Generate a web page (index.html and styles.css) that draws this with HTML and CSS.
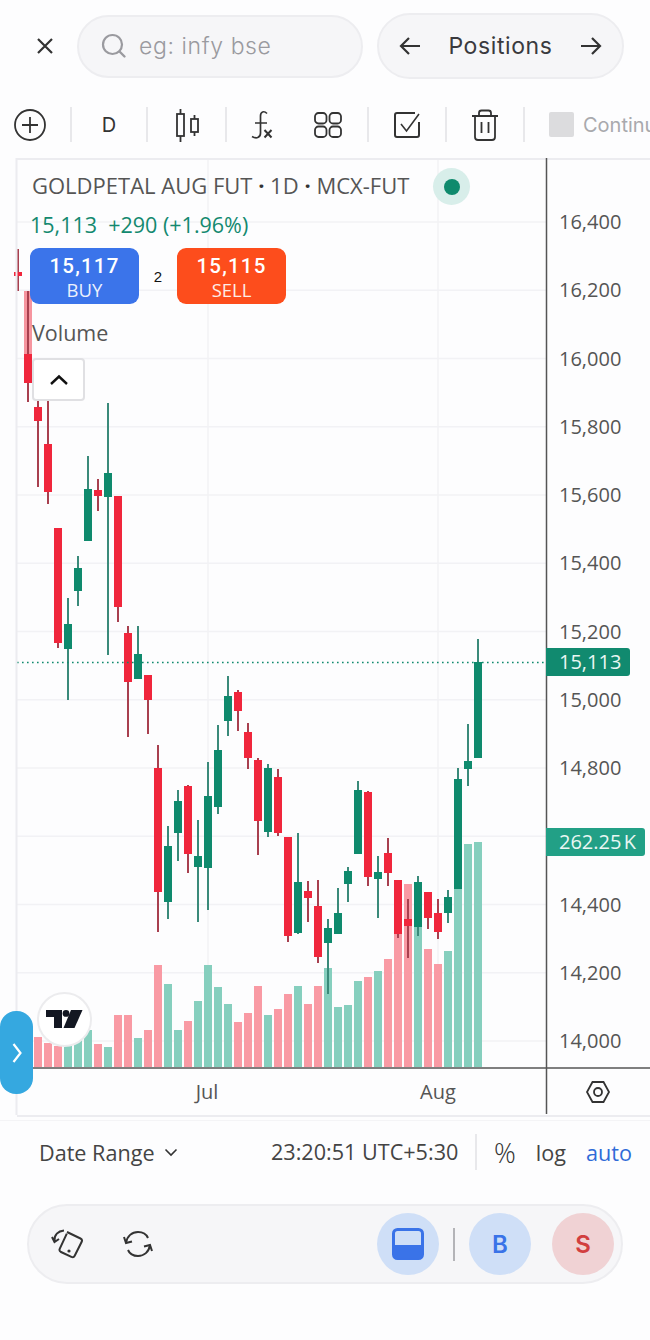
FILE: index.html
```html
<!DOCTYPE html>
<html lang="en">
<head>
    <meta charset="UTF-8">
    <meta name="viewport" content="width=device-width, initial-scale=1.0">
    <title>GOLDPETAL AUG FUT</title>
    <link rel="stylesheet" href="styles.css">
</head>
<body>
    <div class="topbar">
        <button class="close-btn" aria-label="Close">
            <svg width="18" height="18" viewBox="0 0 18 18"><path d="M2 2l14 14M16 2L2 16" class="ink" stroke-width="2.2"/></svg>
        </button>
        <div class="search">
            <svg width="28" height="28" viewBox="0 0 28 28"><circle cx="12.5" cy="12.5" r="9.5" fill="none" stroke="#9a9a9f" stroke-width="2.2"/><path d="M19.5 19.5l5 5" stroke="#9a9a9f" stroke-width="2.4" stroke-linecap="round"/></svg>
            <span>eg: infy bse</span>
        </div>
        <div class="watchlist">
            <svg width="22" height="20" viewBox="0 0 22 20"><path d="M21 10H2M10 2l-8 8 8 8" class="ink" stroke-width="2.2"/></svg>
            <span>Positions</span>
            <svg width="22" height="20" viewBox="0 0 22 20"><path d="M1 10h19M12 2l8 8-8 8" class="ink" stroke-width="2.2"/></svg>
        </div>
    </div>

    <div class="toolbar">
        <div class="tool tool-plus">
            <svg width="32" height="32" viewBox="0 0 32 32"><circle cx="16" cy="16" r="15" class="ink" stroke-width="1.8"/><path d="M16 8v16M8 16h16" class="ink" stroke-width="1.8"/></svg>
        </div>
        <div class="tool tool-d">D</div>
        <div class="tool tool-candle">
            <svg width="26" height="34" viewBox="0 0 26 34"><path d="M6.5 1v33M20.5 7v21" class="ink" stroke-width="1.8"/><rect x="3" y="6" width="7" height="22" class="ink-box" stroke-width="1.8"/><rect x="17" y="11" width="7" height="13" class="ink-box" stroke-width="1.8"/></svg>
        </div>
        <div class="tool tool-study">
            <svg width="24" height="30" viewBox="0 0 24 30"><path d="M17 3.5C14 .5 10.5 1.5 10.5 6v17c0 5-4.5 6-8.5 3.5M5 13h12" class="ink" stroke-width="1.7"/><path d="M14.5 20l7 7.5M21.5 20l-7 7.5" class="ink" stroke-width="2"/></svg>
            <svg width="28" height="26" viewBox="0 0 28 26"><rect x="1" y="1" width="11.5" height="10.5" rx="3.5" class="ink" stroke-width="1.8"/><rect x="15.5" y="1" width="11.5" height="10.5" rx="3.5" class="ink" stroke-width="1.8"/><rect x="1" y="14.5" width="11.5" height="10.5" rx="3.5" class="ink" stroke-width="1.8"/><rect x="15.5" y="14.5" width="11.5" height="10.5" rx="3.5" class="ink" stroke-width="1.8"/></svg>
        </div>
        <div class="tool tool-check">
            <svg width="28" height="28" viewBox="0 0 28 28"><path d="M22 2H4a2 2 0 0 0-2 2v20a2 2 0 0 0 2 2h20a2 2 0 0 0 2-2V11" class="ink" stroke-width="2"/><path d="M8 13l5.5 7L26 3" class="ink" stroke-width="1.6"/></svg>
        </div>
        <div class="tool tool-trash">
            <svg width="28" height="32" viewBox="0 0 28 32"><path d="M1 7h26M8 7V4a2.5 2.5 0 0 1 2.5-2.5h7A2.5 2.5 0 0 1 20 4v3" class="ink" stroke-width="1.8"/><path d="M4 7v21a3 3 0 0 0 3 3h14a3 3 0 0 0 3-3V7M10.5 13v11M17.5 13v11" class="ink" stroke-width="1.8"/></svg>
        </div>
        <div class="tool-continue">
            <span class="tick-box"></span>
            <span>Continue</span>
        </div>
    </div>

    <div class="chart" id="chart">
        <svg class="plot" id="plot" width="650" height="960" viewBox="0 158 650 960"></svg>
        <div id="axis"></div>

        <div class="legend">
            <div class="legend-title">GOLDPETAL AUG FUT <b>·</b> 1D <b>·</b> MCX-FUT</div>
            <div class="legend-price">15,113&nbsp; +290 (+1.96%)</div>
            <div class="trade-row">
                <div class="trade trade-buy"><strong>15,117</strong><span>BUY</span></div>
                <div class="spread">2</div>
                <div class="trade trade-sell"><strong>15,115</strong><span>SELL</span></div>
            </div>
            <div class="legend-volume">Volume</div>
            <div class="collapse-btn">
                <svg width="20" height="12" viewBox="0 0 20 12"><path d="M2 10l8-7.5 8 7.5" fill="none" stroke="#111" stroke-width="2.4"/></svg>
            </div>
        </div>

        <div class="live-dot"><i></i></div>
        <div class="tag tag-price">15,113</div>
        <div class="tag tag-volume">262.25 K</div>

        <div class="side-tab">
            <svg width="12" height="22" viewBox="0 0 12 22"><path d="M2.5 2l7 9-7 9" fill="none" stroke="#fff" stroke-width="2.2"/></svg>
        </div>
        <div class="tv-logo">
            <svg width="38" height="20" viewBox="0 0 38 20"><path d="M0 0h16v18H8V7H0z" fill="#131722"/><circle cx="20" cy="3.4" r="3.4" fill="#131722"/><path d="M25 0h11.5l-8 18H17.5z" fill="#131722"/></svg>
        </div>
        <div class="axis-settings">
            <svg width="26" height="24" viewBox="0 0 26 24"><path d="M7.5 2h11L24 12l-5.5 10h-11L2 12z" class="ink" stroke-width="1.8"/><circle cx="13" cy="12" r="4" class="ink" stroke-width="1.8"/></svg>
        </div>
    </div>

    <div class="statusbar">
        <div class="date-range">
            <span>Date Range</span>
            <svg width="14" height="9" viewBox="0 0 14 9"><path d="M1.5 1.5L7 7l5.5-5.5" class="ink" stroke-width="1.6"/></svg>
        </div>
        <div class="clock">23:20:51 UTC+5:30</div>
        <div class="scale-opts">
            <span class="opt-percent">%</span>
            <span>log</span>
            <span class="opt-auto">auto</span>
        </div>
    </div>

    <div class="actions">
        <svg class="act-icon" width="34" height="30" viewBox="0 0 34 30"><path d="M16 3.5L29.5 10a2.5 2.5 0 0 1 1.2 3.3l-7 14a2.5 2.5 0 0 1-3.3 1.1L10 23.5a2.5 2.5 0 0 1-1.2-3.3l7-15" transform="translate(0 -.5)" class="ink" stroke-width="2"/><circle cx="18" cy="22" r="1.6" fill="#333"/><path d="M13 1.5C7 2 3 6 3.5 12M1 8l2.5 5L8 10" class="ink" stroke-width="2"/></svg>
        <svg class="act-icon act-sync" width="30" height="28" viewBox="0 0 30 28"><path d="M3 13C4 6 9 2 15 2c5 0 8.5 2.5 10 6M27 15c-1 7-6 11-12 11-5 0-8.5-2.5-10-6" class="ink" stroke-width="2"/><path d="M1 7l2 6 6-1.5M29 21l-2-6-6 1.5" class="ink" stroke-width="2"/></svg>
        <div class="act-right">
            <div class="round round-blue">
                <svg width="32" height="32" viewBox="0 0 32 32"><rect x="1.5" y="1.5" width="29" height="29" rx="4" fill="none" stroke="#3a73e8" stroke-width="3"/><path d="M1.5 17h29v9.5a4 4 0 0 1-4 4h-21a4 4 0 0 1-4-4z" fill="#3a73e8"/></svg>
            </div>
            <span class="act-sep"></span>
            <div class="round round-blue round-b">B</div>
            <div class="round round-red">S</div>
        </div>
    </div>

    <script src="script.js"></script>
</body>
</html>
```

FILE: styles.css
```css
* {
    box-sizing: border-box;
}
body {
    margin: 0;
    width: 650px;
    height: 1340px;
    overflow: hidden;
    background-color: #fdfdfe;
    font-family: "Open Sans", Arial, sans-serif;
    color: #555;
}
.ink {
    fill: none;
    stroke: #333;
}
.ink-box {
    fill: #fdfdfe;
    stroke: #333;
}

/* top search row */
.topbar {
    display: flex;
    align-items: center;
    height: 66px;
    margin-top: 13px;
}
.close-btn {
    display: flex;
    align-items: center;
    justify-content: center;
    width: 18px;
    height: 18px;
    margin-left: 36px;
    padding: 0;
    border: none;
    background: none;
}
.search {
    display: flex;
    align-items: center;
    gap: 11px;
    width: 286px;
    height: 63px;
    margin-left: 23px;
    padding-left: 21px;
    background-color: #f6f6f8;
    border: 2px solid #ededf0;
    border-radius: 32px;
    font-family: Inter, Arial, sans-serif;
    font-size: 23px;
    font-weight: 300;
    letter-spacing: 0.6px;
    color: #9a9a9f;
}
.watchlist {
    display: flex;
    align-items: center;
    justify-content: space-between;
    width: 247px;
    height: 66px;
    margin-left: 14px;
    padding: 0 20px 0 20px;
    background-color: #f6f6f8;
    border: 2px solid #ededf0;
    border-radius: 33px;
    font-family: Inter, Arial, sans-serif;
    font-size: 23px;
    letter-spacing: 0.6px;
    color: #3a3a3e;
}

/* drawing tools */
.toolbar {
    display: flex;
    height: 35px;
    margin-top: 28px;
    overflow: hidden;
}
.tool {
    display: flex;
    flex-shrink: 0;
    align-items: center;
    justify-content: center;
    height: 35px;
    border-right: 2px solid #e8e8eb;
}
.tool-plus {
    width: 72px;
    padding-right: 10px;
}
.tool-d {
    width: 76px;
    font-family: Inter, Arial, sans-serif;
    font-size: 20px;
    color: #333;
}
.tool-candle {
    width: 79px;
}
.tool-study {
    width: 142px;
    gap: 40px;
    padding-right: 3px;
}
.tool-check {
    width: 78px;
}
.tool-trash {
    width: 78px;
}
.tool-continue {
    display: flex;
    flex-shrink: 0;
    align-items: center;
    gap: 9px;
    padding-left: 24px;
    font-family: Inter, Arial, sans-serif;
    font-size: 20px;
    color: #a9a9ad;
    white-space: nowrap;
}
.tick-box {
    width: 25px;
    height: 25px;
    background-color: #dcdcde;
    border-radius: 2px;
}

/* chart canvas */
.chart {
    position: relative;
    height: 960px;
    margin-top: 16px;
    overflow: hidden;
}
.plot {
    display: block;
}
.axis-label {
    position: absolute;
    left: 559px;
    font-size: 20px;
    line-height: 28px;
    color: #555;
}
.date-label {
    position: absolute;
    top: 921px;
    width: 60px;
    font-size: 20px;
    font-weight: 500;
    line-height: 26px;
    text-align: center;
    color: #555;
}
.legend {
    position: absolute;
    left: 30px;
    top: 13px;
}
.legend-title {
    margin-left: 2px;
    font-size: 22px;
    line-height: 28px;
    white-space: nowrap;
}
.legend-title b {
    font-weight: 700;
    color: #333;
}
.legend-price {
    margin-top: 12px;
    font-size: 21.5px;
    line-height: 28px;
    color: #13896f;
    white-space: nowrap;
}
.trade-row {
    display: flex;
    align-items: center;
    margin-top: 9px;
}
.trade {
    display: flex;
    flex-direction: column;
    align-items: center;
    width: 109px;
    height: 56px;
    padding-top: 6px;
    border-radius: 9px;
    color: #fff;
}
.trade strong {
    font-family: Roboto, Arial, sans-serif;
    font-size: 20.5px;
    font-weight: 500;
    line-height: 24px;
    letter-spacing: 1.2px;
}
.trade span {
    font-size: 18.5px;
    line-height: 23px;
    opacity: 0.9;
}
.trade-buy {
    background-color: #3b74ea;
}
.trade-sell {
    background-color: #fd4d1c;
}
.spread {
    width: 38px;
    font-family: "Liberation Sans", Arial, sans-serif;
    font-size: 15px;
    text-align: center;
    color: #111;
}
.legend-volume {
    margin-top: 15px;
    margin-left: 2px;
    font-size: 21.5px;
    line-height: 28px;
}
.collapse-btn {
    display: flex;
    align-items: center;
    justify-content: center;
    width: 53px;
    height: 43px;
    margin-top: 11px;
    margin-left: 2px;
    background-color: #fff;
    border: 2px solid #e0e0e3;
    border-radius: 4px;
}
.live-dot {
    position: absolute;
    left: 433px;
    top: 10px;
    display: flex;
    align-items: center;
    justify-content: center;
    width: 37px;
    height: 37px;
    background-color: #d8eeea;
    border-radius: 50%;
}
.live-dot i {
    width: 16px;
    height: 16px;
    background-color: #0f8a6d;
    border-radius: 50%;
}
.tag {
    position: absolute;
    left: 546px;
    height: 28px;
    padding-left: 13px;
    border-radius: 0 3px 3px 0;
    font-size: 20px;
    line-height: 28px;
    color: #eaf7f3;
}
.tag-price {
    top: 490px;
    width: 84px;
    background-color: #118a6f;
}
.tag-volume {
    top: 670px;
    width: 99px;
    background-color: #22a086;
    word-spacing: -3px;
}
.side-tab {
    position: absolute;
    left: 0;
    top: 853px;
    display: flex;
    align-items: center;
    justify-content: center;
    width: 33px;
    height: 83px;
    background-color: #35a8e0;
    border-radius: 16px;
}
.tv-logo {
    position: absolute;
    left: 37px;
    top: 834px;
    display: flex;
    align-items: center;
    justify-content: center;
    width: 55px;
    height: 55px;
    background-color: #fff;
    border: 2px solid #ececee;
    border-radius: 50%;
}
.axis-settings {
    position: absolute;
    left: 585px;
    top: 922px;
}

/* status row under chart */
.statusbar {
    display: flex;
    align-items: center;
    height: 50px;
    margin-top: 2px;
    padding: 13px 0 0 39px;
    border-top: 1px solid #f4f4f6;
    font-size: 21.6px;
    color: #444;
    white-space: nowrap;
}
.date-range {
    display: flex;
    align-items: center;
    gap: 9px;
    width: 232px;
}
.clock {
    width: 206px;
    height: 36px;
    border-right: 2px solid #e8e8eb;
    line-height: 36px;
}
.scale-opts {
    display: flex;
    align-items: center;
    gap: 20px;
    padding-left: 17px;
}
.opt-percent {
    font-size: 27px;
    font-weight: 300;
    color: #333;
}
.opt-auto {
    color: #2f6bd8;
}

/* bottom action pill */
.actions {
    display: flex;
    align-items: center;
    width: 596px;
    height: 80px;
    margin-top: 34px;
    margin-left: 27px;
    padding-left: 22px;
    background-color: #f6f6f8;
    border: 2px solid #ededf0;
    border-radius: 40px;
}
.act-sync {
    margin-left: 38px;
}
.act-right {
    display: flex;
    align-items: center;
    margin-left: auto;
    margin-right: 7px;
}
.round {
    display: flex;
    align-items: center;
    justify-content: center;
    width: 62px;
    height: 62px;
    border-radius: 50%;
    font-family: Inter, Arial, sans-serif;
    font-size: 24px;
    font-weight: 600;
}
.round-blue {
    background-color: #cfdff7;
    color: #3a73e8;
}
.round-red {
    margin-left: 21px;
    background-color: #f0d2d4;
    color: #d23f3f;
}
.act-sep {
    width: 2px;
    height: 33px;
    margin: 0 14px;
    background-color: #b4b4b8;
}
```

FILE: script.js
```js
// candles: x, wick top, wick bottom, body top, body bottom, up?
const candles = [
    [18, 249, 291, 272, 276, 0], [28, 291, 402, 354, 383, 0], [38, 395, 487, 407, 421, 0],
    [48, 401, 504, 444, 492, 0], [58, 528, 648, 528, 643, 0], [68, 598, 700, 624, 649, 1],
    [78, 556, 606, 568, 591, 1], [88, 456, 541, 489, 541, 1], [98, 479, 511, 490, 496, 0],
    [108, 403, 655, 473, 497, 1], [118, 496, 622, 496, 607, 0], [128, 626, 737, 633, 682, 0],
    [138, 626, 679, 654, 679, 1], [148, 675, 734, 675, 700, 0], [158, 745, 932, 768, 892, 0],
    [168, 826, 919, 846, 902, 1], [178, 790, 861, 801, 833, 1], [188, 785, 873, 786, 854, 0],
    [198, 820, 922, 856, 867, 1], [208, 762, 910, 796, 868, 1], [218, 725, 814, 750, 807, 1],
    [228, 676, 736, 696, 721, 1], [238, 690, 731, 692, 711, 0], [248, 723, 769, 732, 758, 0],
    [258, 758, 855, 760, 821, 0], [268, 764, 837, 768, 832, 1], [278, 769, 836, 777, 833, 0],
    [288, 837, 942, 837, 936, 0], [298, 833, 934, 882, 933, 1], [308, 881, 922, 891, 898, 0],
    [318, 880, 963, 906, 957, 0], [328, 919, 994, 928, 943, 1], [338, 888, 934, 913, 934, 1],
    [348, 867, 902, 871, 884, 1], [358, 781, 854, 790, 854, 1], [368, 791, 886, 792, 877, 0],
    [378, 856, 918, 872, 879, 1], [388, 838, 886, 853, 873, 0], [398, 880, 938, 880, 934, 0],
    [408, 899, 958, 919, 926, 0], [418, 876, 936, 882, 927, 1], [428, 892, 929, 892, 918, 0],
    [438, 899, 939, 913, 932, 0], [448, 890, 923, 897, 913, 1], [458, 768, 889, 779, 889, 1],
    [468, 724, 786, 761, 769, 1], [478, 639, 758, 662, 758, 1]
];

// volume bars: x, top, up?
const volumes = [
    [38, 1037, 0], [48, 1043, 0], [58, 1046, 0], [68, 1040, 1], [78, 1035, 1], [88, 1030, 1],
    [98, 1044, 0], [108, 1047, 1], [118, 1015, 0], [128, 1015, 0], [138, 1038, 1], [148, 1030, 0],
    [158, 965, 0], [168, 984, 1], [178, 1030, 1], [188, 1021, 0], [198, 1001, 1], [208, 965, 1],
    [218, 987, 1], [228, 1004, 1], [238, 1022, 0], [248, 1013, 0], [258, 986, 0], [268, 1015, 1],
    [278, 1009, 0], [288, 994, 0], [298, 986, 1], [308, 1004, 0], [318, 986, 0], [328, 968, 1],
    [338, 1007, 1], [348, 1005, 1], [358, 981, 1], [368, 977, 0], [378, 971, 1], [388, 959, 0],
    [398, 920, 0], [408, 884, 0], [418, 910, 1], [428, 949, 0], [438, 964, 0], [448, 951, 1],
    [458, 889, 1], [468, 844, 1], [478, 842, 1]
];

const prices = ["16,400", "16,200", "16,000", "15,800", "15,600", "15,400", "15,200",
    "15,000", "14,800", "14,600", "14,400", "14,200", "14,000"];

const plot = document.getElementById("plot");
const axis = document.getElementById("axis");

function addShape(tag, attrs) {
    const el = document.createElementNS("http://www.w3.org/2000/svg", tag);
    for (const key in attrs) {
        el.setAttribute(key, attrs[key]);
    }
    plot.appendChild(el);
}

function addLine(x1, y1, x2, y2, color, width, extra) {
    addShape("line", Object.assign({ x1, y1, x2, y2, stroke: color, "stroke-width": width }, extra || {}));
}

// grid
prices.forEach((price, i) => {
    const y = 222 + i * 68.25;
    addLine(17, y, 546, y, "#f2f2f5", 1.5);
    if (price === "14,600") {
        return;
    }
    const label = document.createElement("div");
    label.className = "axis-label";
    label.innerText = price;
    label.style.top = (y - 158 - 14) + "px";
    axis.appendChild(label);
});
addLine(208, 158, 208, 1068, "#f2f2f5", 1.5);
addLine(438, 158, 438, 1068, "#f2f2f5", 1.5);

// volume
volumes.forEach(([x, top, up]) => {
    addShape("rect", { x: x - 4, y: top, width: 8, height: 1067 - top, fill: up ? "#86cfbe" : "#f99aa4" });
});

addShape("rect", { x: 24, y: 291, width: 8, height: 63, fill: "#f6959f" });

// candles
candles.forEach(([x, wickTop, wickBot, bodyTop, bodyBot, up]) => {
    addLine(x, wickTop, x, wickBot, up ? "#3a8a7a" : "#a8404f", 2);
    addShape("rect", { x: x - 4, y: bodyTop, width: 8, height: bodyBot - bodyTop, fill: up ? "#0f8a6d" : "#f0263c" });
});

// last price line
addLine(17, 662.5, 546, 662.5, "#0f8a6d", 1.6, { "stroke-dasharray": "1.6 3.4" });

// frame and scale lines
addLine(16.5, 158, 16.5, 1115, "#ececf0", 2);
addLine(16, 159, 650, 159, "#ececf0", 2);
addLine(17, 1116, 650, 1116, "#ececf0", 2);
addLine(33, 1068, 650, 1068, "#555", 1.5);
addLine(546.5, 158, 546.5, 1114, "#555", 1.5);

// month labels
[["Jul", 207], ["Aug", 438]].forEach(([text, x]) => {
    const label = document.createElement("div");
    label.className = "date-label";
    label.innerText = text;
    label.style.left = (x - 30) + "px";
    axis.appendChild(label);
});
```
